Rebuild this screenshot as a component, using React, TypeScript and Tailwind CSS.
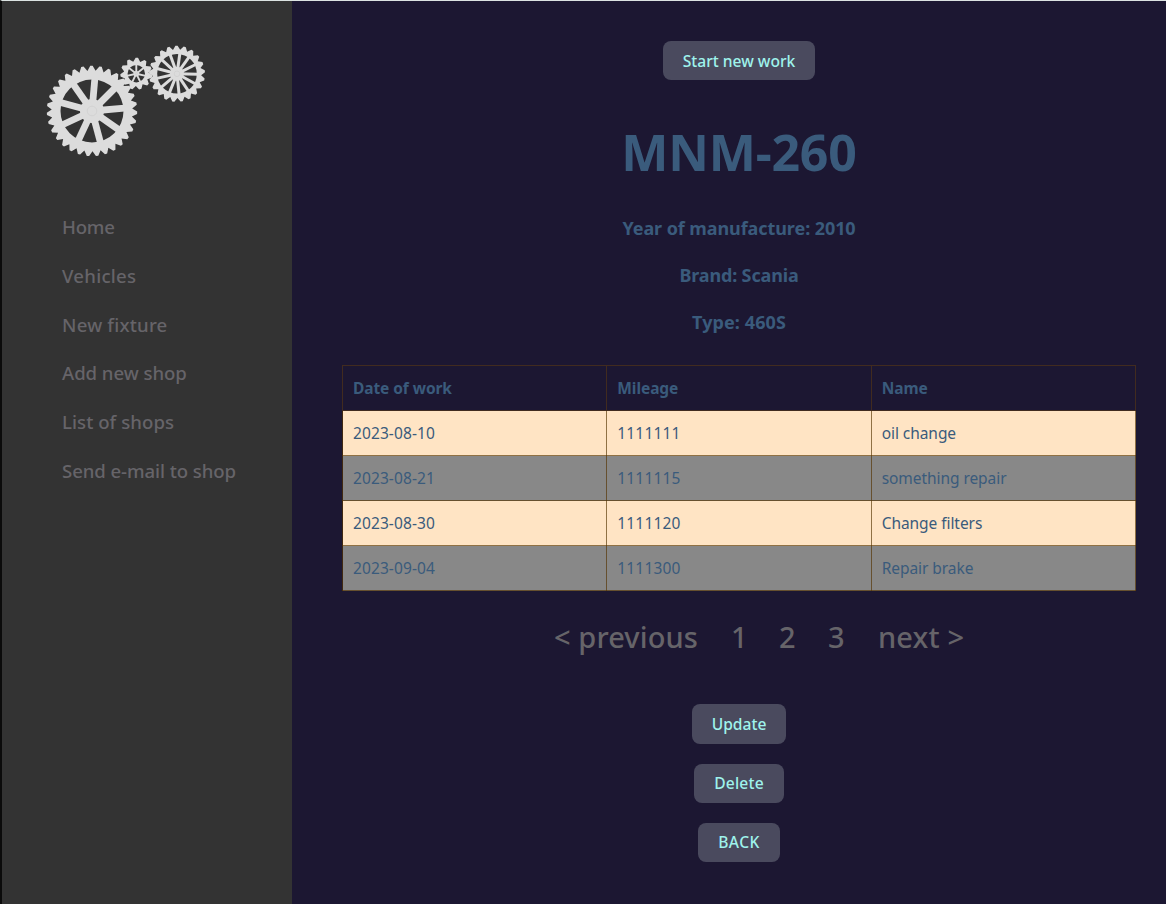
import React from "react";

type GearProps = {
  cx: number;
  cy: number;
  outer: number;
  root: number;
  rim: number;
  hub: number;
  teeth: number;
  toothStart: number;
  spokes: number;
  spokeStart: number;
  spokeWidth: number;
};

const polar = (r: number, deg: number) => {
  const a = (deg * Math.PI) / 180;
  return `${(r * Math.sin(a)).toFixed(2)} ${(-r * Math.cos(a)).toFixed(2)}`;
};

function Gear(g: GearProps) {
  const step = 360 / g.teeth;
  const points: string[] = [];
  for (let i = 0; i < g.teeth; i++) {
    const a = g.toothStart + i * step;
    points.push(polar(g.root, a - step * 0.5));
    points.push(polar(g.outer, a - step * 0.13));
    points.push(polar(g.outer, a + step * 0.13));
  }
  const circle = `M0 ${-g.rim}A${g.rim} ${g.rim} 0 1 0 0 ${g.rim}A${g.rim} ${g.rim} 0 1 0 0 ${-g.rim}Z`;
  return (
    <g transform={`translate(${g.cx} ${g.cy})`}>
      <path d={`M${points.join("L")}Z${circle}`} fillRule="evenodd" fill="#dcdcdc" />
      <circle r={g.hub} fill="#dcdcdc" />
      {Array.from({ length: g.spokes }, (_, i) => (
        <path
          key={i}
          d={`M0 0L${polar(g.rim + 1, g.spokeStart + (i * 360) / g.spokes)}`}
          stroke="#dcdcdc"
          strokeWidth={g.spokeWidth}
        />
      ))}
      <circle r={g.hub * 0.4} fill="none" stroke="#cfcfcf" strokeWidth="0.7" />
    </g>
  );
}

function Logo() {
  return (
    <svg className="block h-[116px] w-[164px]" viewBox="44 43 164 116" aria-hidden="true">
      <Gear cx={92} cy={111} outer={45.2} root={40.3} rim={31.5} hub={12} teeth={31} toothStart={-0.7} spokes={9} spokeStart={5} spokeWidth={6.8} />
      <Gear cx={136.3} cy={73.7} outer={16} root={12.3} rim={8.7} hub={2.8} teeth={11} toothStart={2} spokes={7} spokeStart={0} spokeWidth={1.9} />
      <Gear cx={177} cy={73.8} outer={28} root={24.2} rim={19.8} hub={7} teeth={21} toothStart={-1} spokes={13} spokeStart={8} spokeWidth={3} />
    </svg>
  );
}

const links = [
  { label: "Home", cls: "tracking-[-0.25px]" },
  { label: "Vehicles", cls: "tracking-[0.25px]" },
  { label: "New fixture", cls: "tracking-[0.2px]" },
  { label: "Add new shop", cls: "tracking-[-0.05px]" },
  { label: "List of shops", cls: "tracking-[0.05px]" },
  { label: "Send e-mail to shop", cls: "tracking-[-0.08px]" },
];

const rows = [
  ["2023-08-10", "1111111", "oil change"],
  ["2023-08-21", "1111115", "something repair"],
  ["2023-08-30", "1111120", "Change filters"],
  ["2023-09-04", "1111300", "Repair brake"],
];

const columnTracking = ["tracking-[0.1px]", "tracking-[0.15px]", "tracking-[-0.06px]"];

function Button({ children, className }: { children: React.ReactNode; className: string }) {
  return (
    <button
      className={`flex items-center justify-center rounded-lg bg-[#4a4a5e] text-[15.6px] font-medium whitespace-nowrap text-[#9ff3ec] ${className}`}
    >
      {children}
    </button>
  );
}

export default function App() {
  return (
    <div className="flex h-[904px] w-[1166px] overflow-hidden border-t border-l-2 border-t-[#dce3e2] border-l-[#0b0b0b] bg-[#1c1732] font-['Noto_Sans',sans-serif]">
      <aside className="w-[290px] shrink-0 bg-[#333333] pt-[42px] pl-[42px]">
        <Logo />
        <nav className="mt-[44px] ml-[18px] flex flex-col">
          {links.map((l) => (
            <a key={l.label} className={`h-[48.8px] text-[18.6px] leading-[48.8px] font-medium whitespace-nowrap text-[#666469] ${l.cls}`}>
              {l.label}
            </a>
          ))}
        </nav>
      </aside>
      <main className="flex flex-1 flex-col pr-[30px] pl-[50px] text-[#3a5b7c]">
        <div className="flex flex-col items-center">
          <Button className="mt-10 h-[39px] w-[152px] pt-[2px]">Start new work</Button>
          <h1 className="mt-[37px] text-[50px] leading-[70px] font-bold tracking-[-0.2px]">MNM-260</h1>
          <h3 className="mt-[29px] text-[18px] leading-[24px] font-bold tracking-[-0.08px]">Year of manufacture: 2010</h3>
          <h3 className="mt-[23px] text-[18px] leading-[24px] font-bold tracking-[-0.15px]">Brand: Scania</h3>
          <h3 className="mt-[23px] text-[18px] leading-[24px] font-bold tracking-[0.1px]">Type: 460S</h3>
        </div>
        <table className="mt-[31px] w-[794px] table-fixed border-collapse text-left text-[15.5px] leading-[24px]">
          <thead>
            <tr className="h-[45px]">
              {["Date of work", "Mileage", "Name"].map((h) => (
                <th key={h} className="border border-[#412b1f] px-[10px] py-0 font-bold tracking-[-0.08px]">{h}</th>
              ))}
            </tr>
          </thead>
          <tbody>
            {rows.map((r) => (
              <tr key={r[0]} className="h-[45px] odd:bg-[#ffe4c4] even:bg-[#888888]">
                {r.map((c, i) => (
                  <td key={c} className={`border border-[#553300]/65 px-[10px] py-0 ${columnTracking[i]}`}>{c}</td>
                ))}
              </tr>
            ))}
          </tbody>
        </table>
        <div className="mt-[25px] ml-[212px] flex h-[42px] items-center text-[29px] leading-[42px] font-medium whitespace-nowrap text-[#666469]">
          <span className="w-[177px] tracking-[0.1px]">&lt; previous</span>
          <span className="w-[48px]">1</span>
          <span className="w-[49px]">2</span>
          <span className="w-[50px]">3</span>
          <span className="tracking-[0.15px]">next &gt;</span>
        </div>
        <div className="mt-[46px] flex flex-col items-center">
          <Button className="h-[40px] w-[94px] pt-[2px]">Update</Button>
          <Button className="mt-5 h-[39px] w-[90px] tracking-[0.2px]">Delete</Button>
          <Button className="mt-5 h-[39px] w-[82px] tracking-[0.4px]">BACK</Button>
        </div>
      </main>
    </div>
  );
}
